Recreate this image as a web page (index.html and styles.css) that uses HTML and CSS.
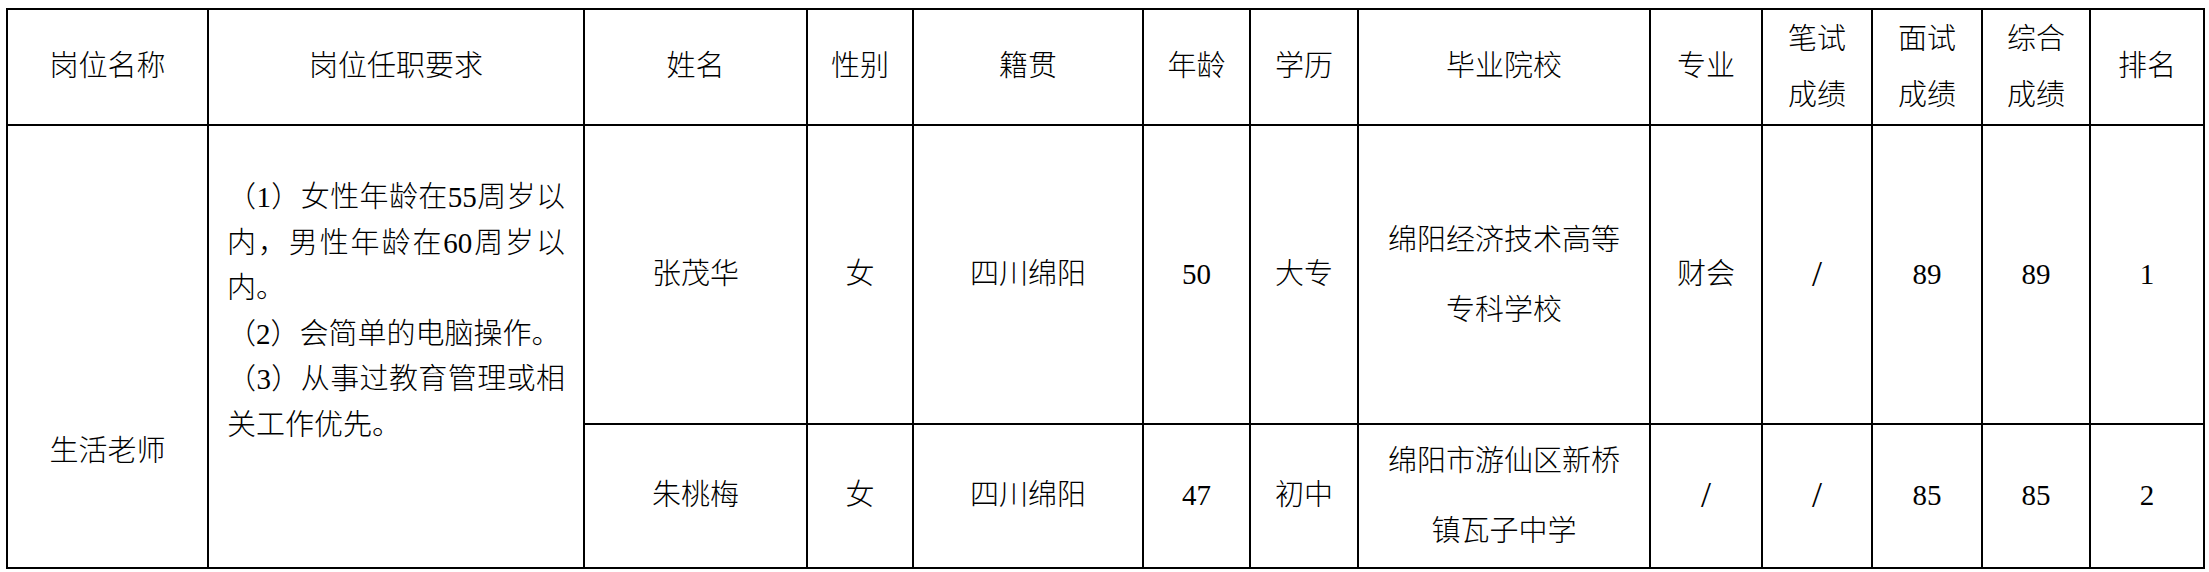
FILE: index.html
```html
<!DOCTYPE html>
<html lang="zh-CN">
<head>
<meta charset="utf-8">
<title>岗位成绩表</title>
<link rel="stylesheet" href="styles.css">
</head>
<body>
<table class="grid">
  <thead>
    <tr class="head">
      <th class="c1">岗位名称</th>
      <th class="c2">岗位任职要求</th>
      <th class="c3">姓名</th>
      <th class="c4">性别</th>
      <th class="c5">籍贯</th>
      <th class="c6">年龄</th>
      <th class="c7">学历</th>
      <th class="c8">毕业院校</th>
      <th class="c9">专业</th>
      <th class="c10 two">笔试<br>成绩</th>
      <th class="c11 two">面试<br>成绩</th>
      <th class="c12 two">综合<br>成绩</th>
      <th class="c13">排名</th>
    </tr>
  </thead>
  <tbody>
    <tr class="r1">
      <td rowspan="2" class="post">生活老师</td>
      <td rowspan="2" class="req">
        <p class="para">
          <span class="ln jl">（1）女性年龄在55周岁以</span>
          <span class="ln jl">内，男性年龄在60周岁以</span>
          <span class="ln">内。</span>
        </p>
        <p class="para">
          <span class="ln">（2）会简单的电脑操作。</span>
        </p>
        <p class="para">
          <span class="ln jl">（3）从事过教育管理或相</span>
          <span class="ln">关工作优先。</span>
        </p>
      </td>
      <td>张茂华</td>
      <td>女</td>
      <td>四川绵阳</td>
      <td>50</td>
      <td>大专</td>
      <td class="school">绵阳经济技术高等<br>专科学校</td>
      <td>财会</td>
      <td class="slash">/</td>
      <td>89</td>
      <td>89</td>
      <td>1</td>
    </tr>
    <tr class="r2">
      <td>朱桃梅</td>
      <td>女</td>
      <td>四川绵阳</td>
      <td>47</td>
      <td>初中</td>
      <td class="school">绵阳市游仙区新桥<br>镇瓦子中学</td>
      <td class="slash">/</td>
      <td class="slash">/</td>
      <td>85</td>
      <td>85</td>
      <td>2</td>
    </tr>
  </tbody>
</table>
</body>
</html>
```

FILE: styles.css
```css
html, body {
  margin: 0;
  padding: 0;
  background: #ffffff;
}

body {
  color: #000000;
  font-family: "Liberation Serif", "Noto Sans CJK SC", serif;
  font-size: 29px;
  font-weight: 300;
}

.grid {
  box-sizing: border-box;
  width: 2199px;
  margin: 8px 0 0 6px;
  border-collapse: separate;
  border-spacing: 0;
  table-layout: fixed;
  border-left: 2px solid #000;
  border-top: 2px solid #000;
}

.grid th,
.grid td {
  box-sizing: border-box;
  padding: 0;
  border-right: 2px solid #000;
  border-bottom: 2px solid #000;
  text-align: center;
  vertical-align: middle;
  font-weight: 300;
  line-height: 45.6px;
  white-space: nowrap;
}

.head th { height: 116px; }
.r1 td { height: 299px; }
.r2 td { height: 144px; }

.c1 { width: 201px; }
.c2 { width: 376px; }
.c3 { width: 223px; }
.c4 { width: 106px; }
.c5 { width: 230px; }
.c6 { width: 107px; }
.c7 { width: 108px; }
.c8 { width: 292px; }
.c9 { width: 112px; }
.c10 { width: 110px; }
.c11 { width: 110px; }
.c12 { width: 108px; }
.c13 { width: 114px; }

.grid th.two { line-height: 56px; }

.grid td.school { line-height: 70px; }

.grid td.post {
  height: auto;
  vertical-align: top;
  padding-top: 303px;
}

.grid td.req {
  height: auto;
  vertical-align: top;
  text-align: justify;
  padding: 49px 18px 0 18px;
  white-space: normal;
}

.para {
  margin: 0;
}

.ln {
  display: block;
  white-space: nowrap;
}

.jl {
  text-align-last: justify;
}

.grid td.slash {
  font-family: "Liberation Serif", serif;
  font-size: 36px;
}
```
